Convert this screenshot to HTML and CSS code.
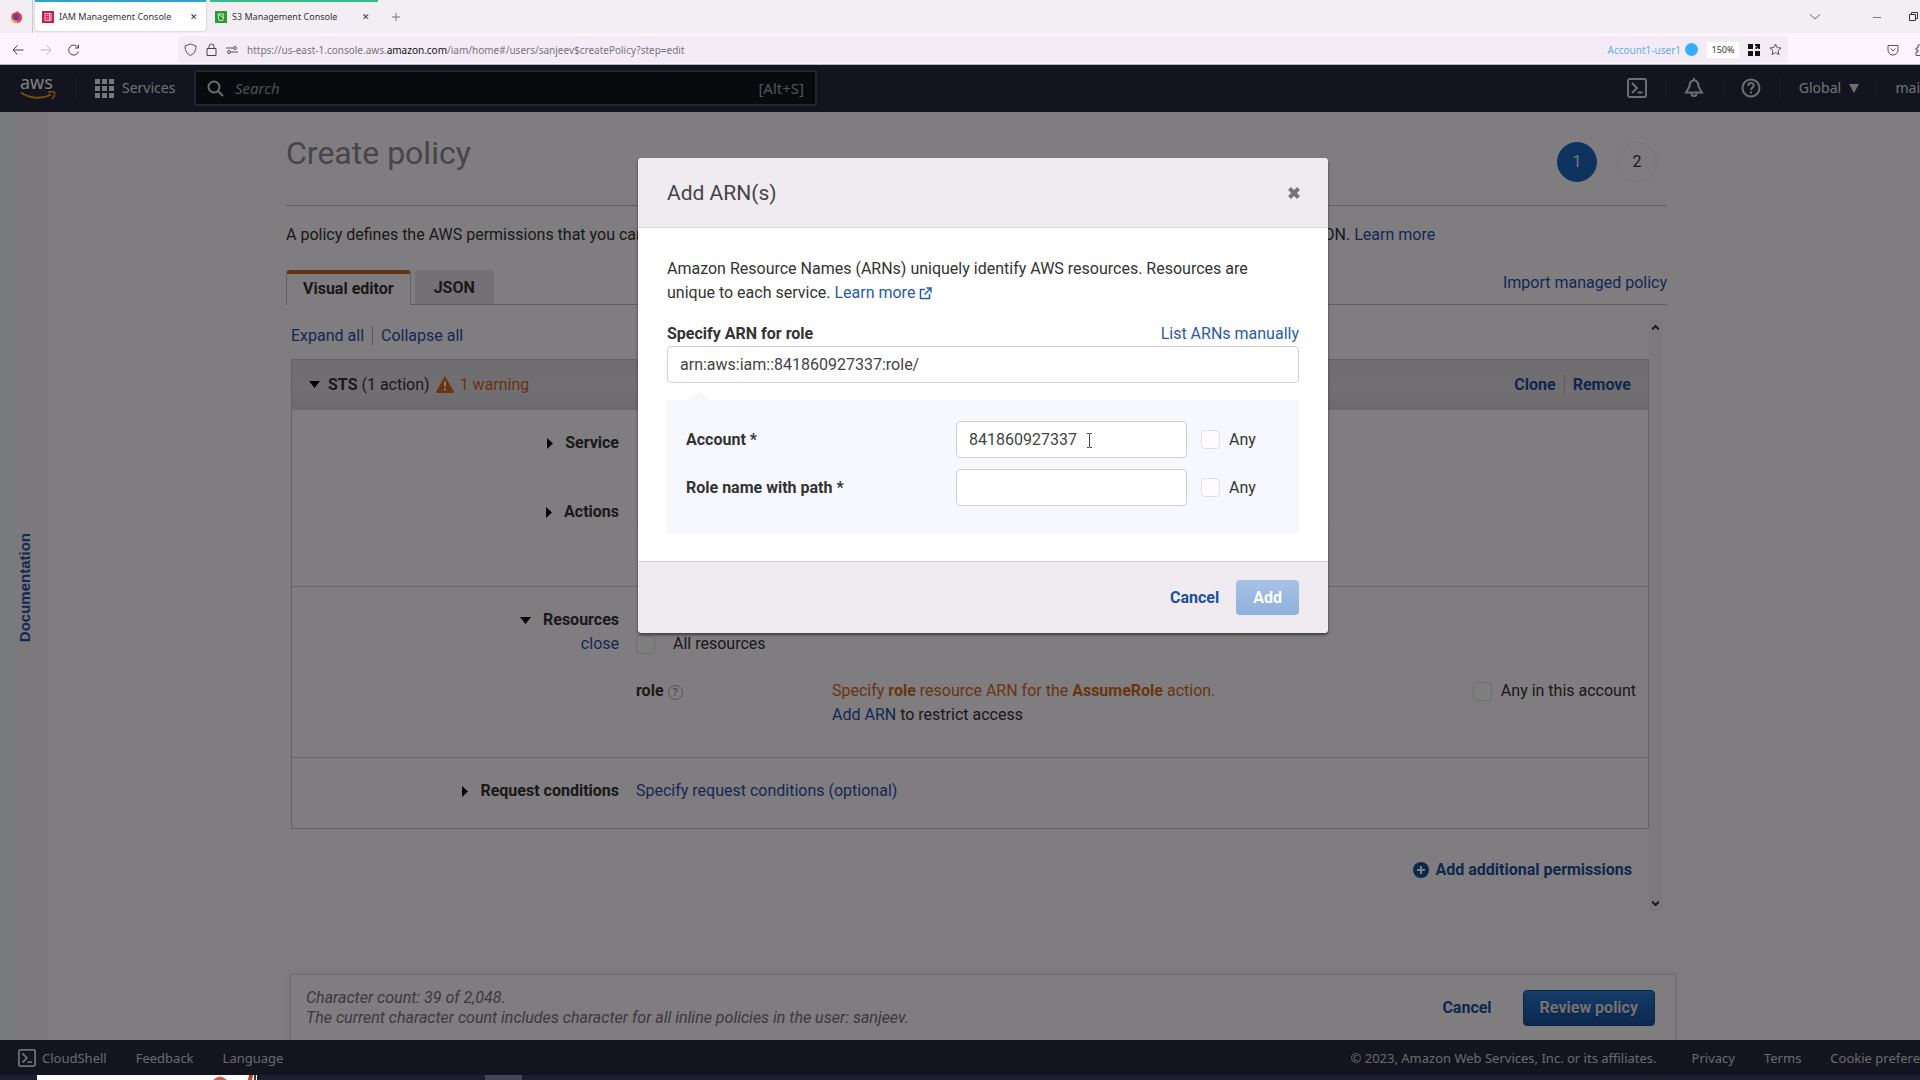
FILE: index.html
```html
<!DOCTYPE html>
<html lang="en">
<head>
    <meta charset="UTF-8">
    <meta name="viewport" content="width=device-width, initial-scale=1.0">
    <title>IAM Management Console</title>
    <link rel="stylesheet" href="styles.css">
</head>
<body>
    <!-- Browser chrome -->
    <div class="browser">
        <div class="tab-strip">
            <div class="firefox">
                <svg width="13" height="14" viewBox="0 0 13 14"><circle cx="6.500" cy="7.500" r="5.500" fill="#f0603a"/><path d="M2 3l2 1.500L7 1l4 3.500 1 4-2 3.500-3 1z" fill="#e8384f"/><circle cx="6" cy="7" r="3" fill="#5b3fb5"/><path d="M1 7c2 4 5 5 8 4-2 3-8 2-8-4z" fill="#fbb13c"/></svg>
            </div>
            <div class="tab active">
                <svg class="favicon" viewBox="0 0 12 12"><path d="M0 0h12v12H0z" fill="#c8204c"/><path d="M3 2.500h6v7H3zM4.500 4.500h2M4.500 7h2M7.500 2.500v7" fill="none" stroke="#f6c5d1"/></svg>
                <span>IAM Management Console</span>
                <button class="tab-close" aria-label="Close tab">✕</button>
            </div>
            <div class="tab s3">
                <svg class="favicon" viewBox="0 0 12 12"><path d="M0 0h12v12H0z" fill="#2f9a34"/><path d="M3 3h5.500L8 9.500H4zM3 3l6 4" fill="none" stroke="#c2e8bd"/></svg>
                <span>S3 Management Console</span>
                <button class="tab-close" aria-label="Close tab">✕</button>
            </div>
            <button class="new-tab" aria-label="New tab">
                <svg width="10" height="10" viewBox="0 0 10 10"><path d="M5 1v8M1 5h8" stroke="#777" fill="none"/></svg>
            </button>
            <div class="window-controls">
                <svg width="12" height="8" viewBox="0 0 12 8"><path d="M1 1.500l5 4.500 5-4.500" stroke="#666" fill="none"/></svg>
                <svg width="8" height="8" viewBox="0 0 8 8"><path d="M0 4.500h8" stroke="#777" fill="none"/></svg>
                <svg width="9" height="9" viewBox="0 0 9 9"><path d="M.5 2.500h6v6h-6zM2.500 2V.5h6v6H7" stroke="#333" fill="none"/></svg>
            </div>
        </div>
        <div class="toolbar">
            <div class="nav-buttons">
                <button aria-label="Back"><svg width="12" height="12" viewBox="0 0 12 12"><path d="M11.500 6H1M5.500 1.500L1 6l4.500 4.500" stroke="#444" fill="none"/></svg></button>
                <button aria-label="Forward"><svg width="12" height="12" viewBox="0 0 12 12"><path d="M.5 6H11M6.500 1.500L11 6l-4.500 4.500" stroke="#bbb" fill="none"/></svg></button>
                <button aria-label="Reload"><svg width="12" height="12" viewBox="0 0 12 12"><path d="M10.500 7.500A5 5 0 1 1 10 3.500M10.500.5V4H7" stroke="#444" fill="none"/></svg></button>
            </div>
            <div class="url-bar">
                <svg width="13" height="13" viewBox="0 0 13 13"><path d="M6.500 1L12 3c0 5-2 8-5.500 9.500C3 11 1 8 1 3z" stroke="#555" fill="none"/></svg>
                <svg width="11" height="13" viewBox="0 0 11 13"><path d="M1 5.500h9v7H1zM3 5.500v-2a2.500 2.500 0 0 1 5 0v2" stroke="#444" fill="none"/></svg>
                <svg width="12" height="10" viewBox="0 0 12 10"><path d="M0 3h7M5 7h7" stroke="#555" fill="none"/><circle cx="9" cy="3" r="1.500" fill="none" stroke="#555"/><circle cx="3" cy="7" r="1.500" fill="none" stroke="#555"/></svg>
                <span class="url">https://us-east-1.console.aws.<b>amazon.com</b>/iam/home#/users/sanjeev$createPolicy?step=edit</span>
                <span class="container-name">Account1-user1 <i></i></span>
                <span class="zoom-level">150%</span>
                <svg class="grid-icon" width="12" height="12" viewBox="0 0 12 12"><path d="M0 0h5v5H0zM0 7h5v5H0zM7 7h5v5H7z" fill="#111"/><path d="M7 0h5v5h-2V3.500L8 5.500 7 4l2-2H7z" fill="#111"/></svg>
                <svg width="13" height="13" viewBox="0 0 13 13"><path d="M6.500 1l1.600 3.600 4 .4-3 2.700.9 4-3.500-2.100L3 11.700l.9-4L.9 5l4-.4z" stroke="#555" fill="none"/></svg>
            </div>
            <div class="extensions">
                <svg width="12" height="12" viewBox="0 0 12 12"><path d="M1 1.500h10V6a5 5 0 0 1-10 0zM3.500 4.500L6 7l2.500-2.500" stroke="#555" fill="none"/></svg>
                <svg width="5" height="12" viewBox="0 0 5 12"><path d="M5 1H3v3H1v2h2v2H1v3.500h4" stroke="#555" fill="none"/></svg>
            </div>
        </div>
    </div>

    <div class="console">
        <header class="aws-header">
            <a href="#" class="aws-logo" aria-label="AWS home">
                <span>aws</span>
                <svg width="36" height="10" viewBox="0 0 36 10"><path d="M1 1.500c9 6.500 21 7 30 2" stroke="#f09a20" stroke-width="2" fill="none"/><path d="M28 1.500c3-1.200 5.500-1 6.500-.2.500 2-.5 4.700-2.500 6.700" stroke="#f09a20" stroke-width="1.500" fill="none"/></svg>
            </a>
            <button class="services">
                <svg width="19" height="19" viewBox="0 0 19 19"><path d="M0 0h5v5H0zM7 0h5v5H7zM14 0h5v5h-5zM0 7h5v5H0zM7 7h5v5H7zM14 7h5v5h-5zM0 14h5v5H0zM7 14h5v5H7zM14 14h5v5h-5z" fill="#f0eef5"/></svg>
                Services
            </button>
            <label class="search">
                <svg width="17" height="17" viewBox="0 0 17 17"><circle cx="7" cy="7" r="5.500" stroke="#dad8de" stroke-width="2" fill="none"/><path d="M11 11l5 5" stroke="#dad8de" stroke-width="2"/></svg>
                <input type="text" placeholder="Search" aria-label="Search">
                <span>[Alt+S]</span>
            </label>
            <nav class="header-tools">
                <button aria-label="CloudShell"><svg width="20" height="20" viewBox="0 0 20 20"><rect x="1" y="1" width="18" height="18" rx="2" fill="none" stroke="#dddbe2" stroke-width="2"/><path d="M5 5l5 5-5 5M10.500 14.500h5" fill="none" stroke="#dddbe2" stroke-width="2"/></svg></button>
                <button aria-label="Notifications"><svg width="20" height="20" viewBox="0 0 20 20"><path d="M10 2c-4 1-4.500 4-4.500 6.500L2 14.500h16l-3.500-6C14.500 6 14 3 10 2zM10 0v2M7.500 15.500a2.500 2.500 0 0 0 5 0" fill="none" stroke="#dddbe2" stroke-width="2"/></svg></button>
                <button aria-label="Help"><svg width="20" height="20" viewBox="0 0 20 20"><circle cx="10" cy="10" r="8.500" fill="none" stroke="#dddbe2" stroke-width="2"/><path d="M7.200 8c0-4 5.600-3.700 5.600-.5 0 2-2.800 2-2.800 4.500M10 13.500v2" fill="none" stroke="#dddbe2" stroke-width="2"/></svg></button>
                <button class="region">Global <svg width="10" height="9" viewBox="0 0 10 9"><path d="M0 0h10L5 9z" fill="#dddbe2"/></svg></button>
                <button class="account">mai</button>
            </nav>
        </header>

        <div class="workspace">
            <aside class="doc-rail">
                <a href="#">Documentation</a>
            </aside>
            <main class="content">
                <div class="page-head">
                    <h1>Create policy</h1>
                    <ol class="steps">
                        <li class="current">1</li>
                        <li>2</li>
                    </ol>
                </div>
                <p class="intro">A policy defines the AWS permissions that you can assign to a user, group, or role. You can create and edit a policy in the visual editor and using JSON. <a href="#">Learn more</a></p>

                <div class="tabs">
                    <button class="editor-tab selected">Visual editor</button>
                    <button class="editor-tab">JSON</button>
                    <a href="#" class="import-link">Import managed policy</a>
                </div>

                <div class="scroll-area">
                    <div class="editor">
                        <div class="expand-links"><a href="#">Expand all</a><a href="#">Collapse all</a></div>
                        <section class="panel">
                            <div class="panel-head">
                                <svg class="caret" width="11" height="7" viewBox="0 0 11 7"><path d="M0 0h11L5.500 7z"/></svg>
                                <span><b>STS</b> (1 action)</span>
                                <svg width="18" height="17" viewBox="0 0 18 17"><path d="M9 0l9 16q0 1-1 1H1q-1 0-1-1z" fill="#d9691c"/><path d="M9 5.500v5M9 12.500v2" stroke="#fff" stroke-width="2"/></svg>
                                <span class="warning">1 warning</span>
                                <div class="panel-actions"><a href="#">Clone</a><a href="#">Remove</a></div>
                            </div>
                            <div class="row service">
                                <div class="row-label"><svg width="6" height="11" viewBox="0 0 6 11"><path d="M0 0v11l6-5.500z"/></svg>Service</div>
                            </div>
                            <div class="row actions">
                                <div class="row-label"><svg width="6" height="11" viewBox="0 0 6 11"><path d="M0 0v11l6-5.500z"/></svg>Actions</div>
                                <div class="row-line"></div>
                            </div>
                            <div class="row resources">
                                <div>
                                    <div class="row-label"><svg width="11" height="7" viewBox="0 0 11 7"><path d="M0 0h11L5.500 7z"/></svg>Resources</div>
                                    <a href="#" class="close-link">close</a>
                                </div>
                                <div class="resource-body">
                                    <label class="check all-resources"><input type="checkbox">All resources</label>
                                    <div class="role-row">
                                        <div class="role-name">role <span class="hint">?</span></div>
                                        <div class="role-text">
                                            <p class="warning">Specify <b>role</b> resource ARN for the <b>AssumeRole</b> action.</p>
                                            <p><a href="#">Add ARN</a> to restrict access</p>
                                        </div>
                                        <label class="check"><input type="checkbox">Any in this account</label>
                                    </div>
                                </div>
                            </div>
                            <div class="row conditions">
                                <div class="row-label"><svg width="6" height="11" viewBox="0 0 6 11"><path d="M0 0v11l6-5.500z"/></svg>Request conditions</div>
                                <a href="#">Specify request conditions (optional)</a>
                            </div>
                        </section>
                        <a href="#" class="add-permissions">
                            <svg width="16" height="16" viewBox="0 0 16 16"><circle cx="8" cy="8" r="8" fill="#1c4f9c"/><path d="M8 4v8M4 8h8" stroke="#fff" stroke-width="2"/></svg>
                            Add additional permissions
                        </a>
                    </div>
                    <div class="scrollbar">
                        <svg width="7" height="5" viewBox="0 0 7 5"><path d="M0 4.500L3.500 1 7 4.500" stroke="#333" stroke-width="2" fill="none"/></svg>
                        <svg width="7" height="5" viewBox="0 0 7 5"><path d="M0 .5L3.500 4 7 .5" stroke="#333" stroke-width="2" fill="none"/></svg>
                    </div>
                </div>

                <div class="action-bar">
                    <p>Character count: 39 of 2,048.<br>The current character count includes character for all inline policies in the user: sanjeev.</p>
                    <button class="link-btn">Cancel</button>
                    <button class="primary">Review policy</button>
                </div>
            </main>
        </div>

        <footer class="aws-footer">
            <a href="#" class="shell-link"><svg width="18" height="18" viewBox="0 0 20 20"><rect x="1" y="1" width="18" height="18" rx="2" fill="none" stroke="#dddbe2" stroke-width="2"/><path d="M5 5l5 5-5 5M10.500 14.500h5" fill="none" stroke="#dddbe2" stroke-width="2"/></svg>CloudShell</a>
            <a href="#">Feedback</a>
            <a href="#">Language</a>
            <span class="copyright">© 2023, Amazon Web Services, Inc. or its affiliates.</span>
            <a href="#">Privacy</a>
            <a href="#">Terms</a>
            <a href="#">Cookie prefere</a>
        </footer>

        <!-- Add ARN dialog -->
        <div class="backdrop">
            <form class="modal" role="dialog" aria-labelledby="modalTitle">
                <div class="modal-head">
                    <h2 id="modalTitle">Add ARN(s)</h2>
                    <button type="button" class="modal-close" aria-label="Close"><svg width="12" height="12" viewBox="0 0 12 12"><path d="M1.500 1.500l9 9M10.500 1.500l-9 9" stroke="#77737a" stroke-width="4"/></svg></button>
                </div>
                <div class="modal-body">
                    <p>Amazon Resource Names (ARNs) uniquely identify AWS resources. Resources are unique to each service. <a href="#">Learn more <svg class="external" width="13" height="13" viewBox="0 0 13 13"><path d="M6 2.500H1.500v9h9V7M7.500 1H12v4.500M12 1L5.500 7.500" stroke="#2a5ba8" stroke-width="1.500" fill="none"/></svg></a></p>
                    <div class="arn-label">
                        <label for="arn">Specify ARN for role</label>
                        <a href="#">List ARNs manually</a>
                    </div>
                    <input type="text" class="text-input" id="arn" value="arn:aws:iam::841860927337:role/">
                    <div class="arn-parts">
                        <label for="account">Account *</label>
                        <div class="account-field">
                            <input type="text" class="text-input" id="account" value="841860927337">
                            <svg class="text-cursor" width="7" height="15" viewBox="0 0 7 15"><path d="M1 .5h2l.5.500.5-.5h2M3.500 1v13M1 14.500h2l.5-.5.5.500h2" stroke="#444" fill="none"/></svg>
                        </div>
                        <label class="check"><input type="checkbox">Any</label>
                        <label for="roleName">Role name with path *</label>
                        <input type="text" class="text-input" id="roleName">
                        <label class="check"><input type="checkbox">Any</label>
                    </div>
                </div>
                <div class="modal-foot">
                    <button type="button" class="link-btn">Cancel</button>
                    <button type="submit" class="add-btn" disabled>Add</button>
                </div>
            </form>
        </div>
    </div>

    <div class="taskbar">
        <div class="task-preview"><svg width="44" height="5" viewBox="0 0 44 5"><path d="M0 5q7-7 14 0z" fill="#d2604a"/><path d="M36 0h4l-1 5h-4z" fill="#b8402e"/><path d="M41 0h2v5h-2z" fill="#532"/></svg></div>
        <div class="task-item"></div>
    </div>
</body>
</html>
```
FILE: styles.css
```css
* {
    margin: 0;
    padding: 0;
    box-sizing: border-box;
}

body {
    height: 100vh;
    display: flex;
    flex-direction: column;
    overflow: hidden;
    font-family: Roboto, sans-serif;
    font-size: 16px;
    line-height: 24px;
    color: #333;
}

a {
    color: #2b4fa8;
    text-decoration: none;
}

button {
    border: none;
    background: none;
    font: inherit;
    color: inherit;
    cursor: pointer;
}

svg {
    flex: none;
}

/* Browser */
.browser {
    flex: none;
    font-family: "Noto Sans", sans-serif;
    font-size: 10px;
    color: #333;
}

.tab-strip {
    height: 33px;
    display: flex;
    background: #f3eef3;
}

.firefox {
    width: 33px;
    display: flex;
    align-items: center;
    justify-content: center;
    margin-right: 2px;
    border-right: 1px solid #ccc8ce;
}

.tab {
    width: 171px;
    margin: 0 4px 2px 0;
    padding: 0 8px 0 7px;
    display: flex;
    align-items: center;
    gap: 5px;
    border-top: 2px solid #2fa3c8;
    border-radius: 0 0 3px 3px;
    font-size: 9px;
    white-space: nowrap;
}

.tab.active {
    background: #fff;
    box-shadow: 0 0 2px #aaa;
}

.tab.s3 {
    width: 168px;
    padding-left: 5px;
    border-color: #35bd87;
}

.favicon {
    width: 12px;
    height: 12px;
}

.tab-close {
    margin-left: auto;
    font-size: 9px;
}

.new-tab {
    width: 28px;
    display: flex;
    align-items: center;
    justify-content: center;
}

.window-controls {
    display: flex;
    align-items: center;
    margin-left: auto;
    gap: 52px;
    padding-right: 2px;
}

.window-controls svg:last-child {
    margin-left: -24px;
}

.toolbar {
    height: 32px;
    display: flex;
    align-items: center;
    padding-top: 2px;
    background: #fcf5fd;
    border-bottom: 1px solid #b8b2bb;
}

.nav-buttons {
    width: 178px;
    display: flex;
    gap: 16px;
    padding-left: 12px;
}

.nav-buttons svg {
    display: block;
}

.url-bar {
    flex: 1;
    height: 27px;
    display: flex;
    align-items: center;
    gap: 9px;
    padding: 0 6px;
    background: #f3ecf7;
    border-radius: 3px;
}

.url {
    color: #77727b;
    margin-right: auto;
}

.url b {
    font-weight: 400;
    color: #111;
}

.container-name {
    display: flex;
    align-items: center;
    gap: 4px;
    color: #62aee0;
}

.container-name i {
    width: 13px;
    height: 13px;
    border-radius: 50%;
    background: #37adff;
}

.zoom-level {
    width: 32px;
    line-height: 16px;
    font-size: 9px;
    background: #fff;
    text-align: center;
}

.extensions {
    width: 132px;
    display: flex;
    align-items: center;
    justify-content: flex-end;
    gap: 16px;
}

/* Console header */
.console {
    flex: 1;
    min-height: 0;
    position: relative;
    display: flex;
    flex-direction: column;
    background: #fffbff;
}

.aws-header {
    flex: none;
    height: 47px;
    display: flex;
    align-items: center;
    padding-bottom: 1px;
    background: #262840;
    color: #e2e0e6;
    font-family: "Noto Sans", sans-serif;
    font-size: 14px;
}

.aws-logo {
    width: 76px;
    padding-left: 20px;
    display: flex;
    flex-direction: column;
    color: #fff;
    font-size: 18px;
    line-height: 14px;
    border-right: 1px solid #34364d;
}

.aws-logo svg {
    margin-top: 2px;
}

.services {
    width: 118px;
    padding-left: 19px;
    display: flex;
    align-items: center;
    gap: 8px;
}

.search {
    width: 623px;
    height: 36px;
    display: flex;
    align-items: center;
    gap: 11px;
    padding: 0 11px;
    background: #13141c;
    border: 2px solid #4a4856;
    border-radius: 2px;
    color: #aaa8ae;
    font-size: 15px;
}

.search input {
    flex: 1;
    border: none;
    outline: none;
    background: none;
    color: inherit;
    font: inherit;
}

.search input::placeholder {
    color: #a09ea6;
    font-style: italic;
}

.header-tools {
    margin-left: auto;
    display: flex;
    align-items: center;
}

.header-tools button {
    width: 57px;
    height: 26px;
    display: flex;
    align-items: center;
    justify-content: center;
    gap: 8px;
    border-right: 1px solid #34364d;
}

.header-tools .region {
    width: 98px;
}

.header-tools .account {
    width: auto;
    padding-left: 17px;
    border: none;
}

/* Workspace */
.workspace {
    flex: 1;
    min-height: 0;
    display: flex;
}

.doc-rail {
    width: 48px;
    display: flex;
    align-items: center;
    justify-content: center;
    padding: 24px 0 0 2px;
    background: linear-gradient(90deg, #f0f5fc 0 16px, #f7f3f7 16px);
}

.doc-rail a {
    writing-mode: vertical-rl;
    rotate: 180deg;
    font: bold 15px/18px "Liberation Sans", sans-serif;
    color: #2450a0;
}

.content {
    flex: 1;
    min-width: 0;
    display: flex;
    flex-direction: column;
    padding: 0 253px 0 238px;
}

.page-head {
    display: flex;
    align-items: flex-start;
    justify-content: space-between;
    padding: 21px 10px 32px 0;
    border-bottom: 1px solid #c3bec4;
}

.page-head h1 {
    font-size: 32px;
    line-height: 40px;
    font-weight: 400;
    color: #8f8b91;
}

.steps {
    display: flex;
    gap: 20px;
    list-style: none;
    height: 40px;
    padding-top: 9px;
}

.steps li {
    width: 40px;
    height: 40px;
    border: 1px solid #f0ebf0;
    border-radius: 50%;
    line-height: 38px;
    text-align: center;
}

.steps .current {
    background: #1b67bd;
    border-color: #1b67bd;
    color: #eee;
}

.intro {
    margin-top: 17px;
}

.tabs {
    display: flex;
    gap: 4px;
    height: 35px;
    margin-top: 23px;
    border-bottom: 1px solid #c3bec4;
}

.editor-tab {
    padding: 1px 19px 0;
    background: #e8e3e8;
    border-radius: 4px 4px 0 0;
    font-weight: 700;
}

.editor-tab.selected {
    margin-bottom: -1px;
    padding: 0 16px 2px;
    background: #fffbff;
    border: 1px solid #c3bec4;
    border-top: 4px solid #c86428;
    border-bottom: none;
}

.import-link {
    margin-left: auto;
    padding-top: 1px;
}

.scroll-area {
    display: flex;
    padding: 0 5px;
}

.editor {
    flex: 1;
    min-width: 0;
    padding-top: 19px;
}

.expand-links a + a,
.panel-actions a + a {
    margin-left: 8px;
    padding-left: 8px;
    border-left: 1px solid #bbb6bd;
}

.panel {
    margin-top: 11px;
    border: 1px solid #c9c4ca;
}

.panel-head {
    height: 50px;
    display: flex;
    align-items: center;
    gap: 6px;
    padding: 0 17px;
    background: linear-gradient(#ddd9de, #e3dfe4 60%, #d8d3d9);
    border-bottom: 1px solid #d8d3d8;
}

.panel-head .caret {
    margin-right: 2px;
}

b,
.row-label,
.role-name,
.panel-actions,
.link-btn,
.primary,
.add-btn {
    font-weight: 700;
}

.warning {
    color: #d06a20;
}

.panel-actions {
    margin-left: auto;
}

.row {
    display: grid;
    grid-template-columns: 327px 1fr;
    column-gap: 17px;
    padding-right: 17px;
}

.row-label {
    display: flex;
    align-items: center;
    justify-content: flex-end;
    gap: 12px;
}

.service {
    padding-top: 21px;
}

.actions {
    padding: 45px 17px 62px 0;
}

.row-line {
    border-bottom: 1px solid #f3eef3;
}

.resources {
    padding: 21px 12px 30px 0;
    border-top: 1px solid #d3ced4;
    border-bottom: 1px solid #d3ced4;
}

.close-link {
    display: block;
    text-align: right;
}

.check {
    display: flex;
    align-items: center;
    gap: 9px;
}

.check input {
    appearance: none;
    width: 19px;
    height: 19px;
    border: 1px solid #e3dde6;
    border-radius: 4px;
    background: #fffcff;
}

.all-resources {
    margin-top: 24px;
    gap: 18px;
}

.role-row {
    display: flex;
    align-items: flex-start;
    margin-top: 23px;
}

.role-name {
    width: 196px;
}

.hint {
    display: inline-block;
    width: 15px;
    height: 15px;
    border: 1px solid #aaa5ad;
    border-radius: 50%;
    color: #8d8990;
    font-size: 11px;
    font-weight: 400;
    line-height: 13px;
    text-align: center;
}

.role-text {
    flex: 1;
}

.conditions {
    padding: 21px 17px 25px 0;
}

.add-permissions {
    display: flex;
    align-items: center;
    justify-content: flex-end;
    gap: 7px;
    margin: 29px 17px 29px 0;
    font-weight: 700;
    color: #1c4f9c;
}

.panel-actions a {
    color: #1c4f9c;
}

.scrollbar {
    width: 13px;
    margin-top: 15px;
    padding: 5px 3px;
    display: flex;
    flex-direction: column;
    justify-content: space-between;
    background: #f7f2f7;
}

.action-bar {
    height: 66px;
    display: flex;
    align-items: center;
    margin: auto -9px 0 4px;
    padding: 0 20px 0 15px;
    border: 1px solid #dcd7dd;
    border-bottom: none;
    box-shadow: 0 0 4px #dcd7dd;
}

.action-bar p {
    flex: 1;
    line-height: 20px;
    font-style: italic;
    color: #77737a;
}

.link-btn {
    color: #1c4f9c;
}

.action-bar .link-btn {
    margin-right: 31px;
}

.primary {
    height: 36px;
    padding: 0 16px;
    background: linear-gradient(#2a7ad0, #174f9c);
    border: 1px solid #164a90;
    border-radius: 4px;
    color: #e8e4ea;
    text-shadow: 0 1px 1px #123a70;
}

/* Footer */
.aws-footer {
    flex: none;
    height: 35px;
    display: flex;
    align-items: center;
    gap: 29px;
    padding-left: 18px;
    background: #262840;
    font-family: "Noto Sans", sans-serif;
    font-size: 13px;
    color: #d5d2da;
    white-space: nowrap;
}

.aws-footer a {
    color: inherit;
}

.shell-link {
    display: flex;
    align-items: center;
    gap: 6px;
}

.copyright {
    margin-left: auto;
    margin-right: 6px;
}

/* Modal */
.backdrop {
    position: absolute;
    inset: 0;
    display: flex;
    align-items: flex-start;
    justify-content: center;
    padding: 93px 0 0 46px;
    background: rgba(0, 0, 0, 0.5);
}

.modal {
    width: 100%;
    max-width: 690px;
    background: #fff;
    border-radius: 4px;
    box-shadow: 0 2px 3px rgba(0, 0, 0, 0.5);
    overflow: hidden;
}

.modal-head,
.modal-foot {
    display: flex;
    align-items: center;
    background: #f0ebf1;
}

.modal-head {
    height: 70px;
    justify-content: space-between;
    padding: 0 28px 0 29px;
    border-bottom: 1px solid #dcd7dd;
}

.modal-head h2 {
    font-size: 21px;
    font-weight: 400;
    color: #444;
}

.modal-close svg {
    display: block;
}

.modal-body {
    padding: 29px 29px 27px;
}

.modal-body a {
    color: #2a5ba8;
}

.external {
    vertical-align: -2px;
}

.arn-label {
    display: flex;
    justify-content: space-between;
    margin-top: 17px;
}

.arn-label label,
.arn-parts > label {
    font-weight: 700;
}

.text-input {
    width: 100%;
    height: 37px;
    padding: 0 12px;
    border: 1px solid #d3ced6;
    border-radius: 4px;
    background: #fff;
    font: inherit;
    color: #444;
}

.arn-parts {
    position: relative;
    display: grid;
    grid-template-columns: 1fr 231px 98px;
    align-items: center;
    gap: 11px 14px;
    margin-top: 17px;
    padding: 21px 0 28px 19px;
    background: #f7f7fe;
}

/* pointer towards the ARN field */
.arn-parts::before {
    content: "";
    position: absolute;
    top: -9px;
    left: 22px;
    border: 10px solid transparent;
    border-top: none;
    border-bottom: 9px solid #f7f7fe;
}

.arn-parts > .check {
    font-weight: 400;
}

.account-field {
    position: relative;
}

.text-cursor {
    position: absolute;
    left: 130px;
    top: 12px;
}

.modal-foot {
    height: 72px;
    justify-content: flex-end;
    gap: 17px;
    padding: 0 29px;
    border-top: 1px solid #d3ced4;
}

.add-btn {
    height: 35px;
    padding: 0 17px;
    background: linear-gradient(#a6c3e6, #8fb0dc);
    border-radius: 4px;
    color: #fff;
}

/* Taskbar edge */
.taskbar {
    flex: none;
    height: 5px;
    display: flex;
    padding-left: 37px;
    background: #1c1e2e;
}

.task-preview {
    width: 220px;
    display: flex;
    justify-content: flex-end;
    background: #fff;
}

.task-item {
    width: 37px;
    margin-left: 228px;
    background: #454757;
}
```
